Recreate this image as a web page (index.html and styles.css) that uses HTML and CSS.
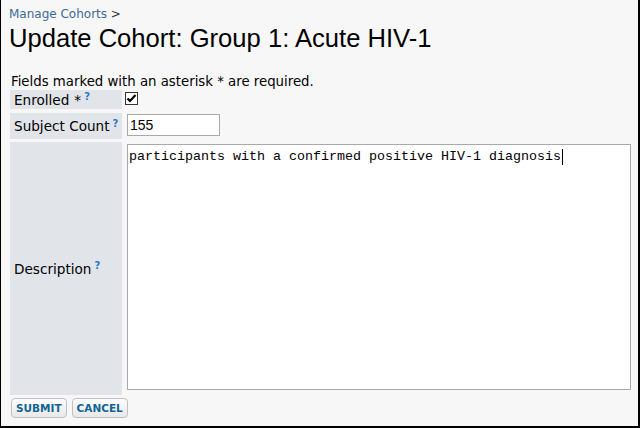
FILE: index.html
```html
<!DOCTYPE html>
<html>
<head>
  <meta charset="UTF-8" />
  <title>Update Cohort</title>
<link rel="stylesheet" href="styles.css">
</head>
<body>
  <div id="page">
    <div class="crumbs"><a href="#">Manage Cohorts</a> &gt;</div>
    <h1 class="title">Update Cohort: Group 1: Acute HIV-1</h1>
    <div class="note">Fields marked with an asterisk * are required.</div>
    <form id="cohortForm">
      <div class="row rowEnrolled">
        <div class="label">Enrolled <span class="req">*</span><sup class="help">?</sup></div>
        <div class="field">
          <span class="checkBox">
            <svg width="11" height="11" viewBox="0 0 11 11"><path d="M1.5 5.5 L4 8 L9.5 2" fill="none" stroke="#000" stroke-width="2.2"/></svg>
          </span>
        </div>
      </div>
      <div class="row rowCount">
        <div class="label">Subject Count<sup class="help">?</sup></div>
        <div class="field"><input type="text" class="countInput" value="155" /></div>
      </div>
      <div class="row rowDesc">
        <div class="label">Description<sup class="help">?</sup></div>
        <div class="field"><textarea class="descInput">participants with a confirmed positive HIV-1 diagnosis</textarea><span class="caret"></span></div>
      </div>
      <div class="buttons">
        <a href="#" class="btn">Submit</a>
        <a href="#" class="btn">Cancel</a>
      </div>
    </form>
  </div>
</body>
</html>
```

FILE: styles.css
```css
html, body {
  margin: 0px;
  padding: 0px;
}
#page {
  box-sizing: border-box;
  width: 640px;
  height: 428px;
  padding: 6px 8px 0px 8px;
  background: #f7f7f7;
  border-left: 1px solid #000000;
  border-right: 2px solid #000000;
  border-bottom: 2px solid #000000;
  font-family: "DejaVu Sans", Verdana, sans-serif;
  color: #000000;
}
.crumbs {
  font-size: 12px;
  line-height: 16px;
  color: #333333;
}
.crumbs a {
  color: #3c6a9b;
  text-decoration: none;
}
.title {
  margin: 1px 0px 0px 0px;
  font-family: "Liberation Sans", Arial, sans-serif;
  font-weight: normal;
  font-size: 25.6px;
  line-height: 30px;
}
.note {
  margin-top: 21px;
  padding-left: 2px;
  font-size: 13.3px;
  line-height: 16px;
}
/* form rows */
#cohortForm {
  padding-left: 1px;
}
.row {
  display: grid;
  grid-template-columns: 112px 1fr;
  column-gap: 3px;
  margin-bottom: 3px;
}
.label {
  background: #e1e5e9;
  font-size: 13.6px;
  padding-left: 4px;
  display: flex;
  align-items: center;
}
.rowEnrolled {
  height: 19px;
  margin-bottom: 4px;
}
.rowCount {
  height: 26px;
}
.rowDesc {
  height: 253px;
}
.req {
  margin-left: 5px;
}
.help {
  color: #2b7bbd;
  font-size: 10px;
  font-weight: bold;
  margin-left: 3px;
  position: relative;
  top: -3px;
}
.field {
  display: flex;
  align-items: flex-start;
  position: relative;
}
.checkBox {
  box-sizing: border-box;
  display: flex;
  align-items: center;
  justify-content: center;
  width: 13px;
  height: 13px;
  margin-top: 2px;
  border: 1px solid #333333;
  background: #ffffff;
}
.countInput {
  box-sizing: border-box;
  width: 93px;
  height: 22px;
  margin: 1px 0px 0px 2px;
  padding: 1px 2px;
  border: 1px solid #a9a9a9;
  background: #ffffff;
  font-family: "Liberation Sans", Arial, sans-serif;
  font-size: 14px;
  color: #000000;
}
.descInput {
  box-sizing: border-box;
  width: 504px;
  height: 246px;
  margin: 2px 0px 0px 2px;
  padding: 4px 1px;
  border: 1px solid #a9a9a9;
  background: #ffffff;
  font-family: "Liberation Mono", "Courier New", monospace;
  font-size: 13.333px;
  color: #000000;
  resize: none;
}
.caret {
  position: absolute;
  left: 437px;
  top: 7px;
  width: 1px;
  height: 16px;
  background: #000000;
}
/* buttons */
.buttons {
  display: flex;
  gap: 5px;
  margin-top: 0px;
  padding-left: 1px;
}
.btn {
  display: block;
  box-sizing: border-box;
  height: 20px;
  line-height: 18px;
  padding: 0px 4px;
  border: 1px solid #c0c0c0;
  border-radius: 4px;
  background: linear-gradient(#fdfdfd, #e8e8e8);
  color: #126495;
  font-size: 10.5px;
  font-weight: bold;
  text-transform: uppercase;
  text-decoration: none;
}
```
